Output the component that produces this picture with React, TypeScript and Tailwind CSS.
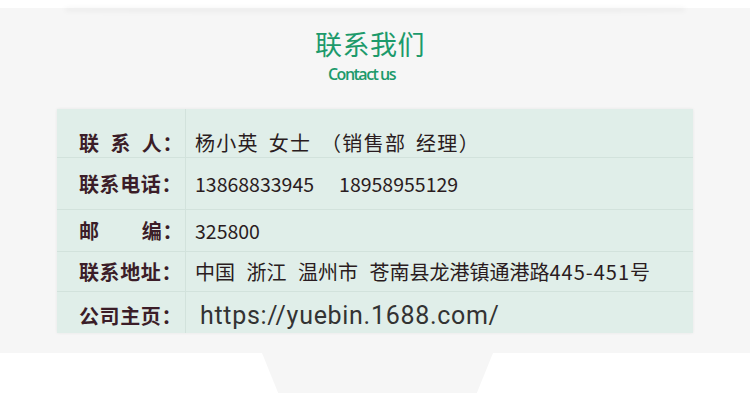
const cjk = "font-['Noto_Sans_CJK_SC',sans-serif]";

interface RowProps {
  label: string[];
  children: React.ReactNode;
  className?: string;
  cellPad?: string;
  last?: boolean;
}

function Row({ label, children, className = '', cellPad = '', last }: RowProps) {
  return (
    <div className={`flex ${last ? '' : 'border-b border-[#d2e2dc]'} ${className}`}>
      <div className={`w-[129px] shrink-0 flex items-center pl-[22px] border-r border-[#d2e2dc] ${cellPad}`}>
        <div className="w-[104px] flex justify-between text-[20px] leading-[30px] font-bold tracking-[0.6px] text-[#3b1d28]">
          {label.map((t) => (
            <span key={t}>{t}</span>
          ))}
        </div>
      </div>
      <div className={`flex-1 flex items-center pl-[9px] text-[#2a1c21] ${cellPad}`}>{children}</div>
    </div>
  );
}

export default function App() {
  return (
    <div className={`w-[750px] h-[402px] bg-white overflow-hidden ${cjk}`}>
      <div className="h-[8px] bg-white" />
      <div className="h-[345px] bg-[#f6f6f6] flex flex-col">
        <div className="mx-auto w-[620px] h-[6px] bg-gradient-to-b from-black/[0.06] to-transparent rounded-b-[50%] blur-[2px]" />

        <div className="flex flex-col items-center mt-[10px]">
          <h1 className="text-[27px] leading-[39px] text-[#1c9a6b] tracking-[0.5px] pr-[10px]">联系我们</h1>
          <p className="text-[16px] leading-[22px] font-semibold text-[#1c9a6b] tracking-[-1.5px] pr-[27px] font-['Open_Sans',sans-serif]">
            Contact us
          </p>
        </div>

        <div className="mt-[24px] ml-[57px] w-[636px] bg-[#e0eee9] shadow-[0_0_3px_rgba(0,0,0,0.07)]">
          <Row label={['联', '系', '人：']} className="h-[49px]" cellPad="pt-[19px]">
            <span className="text-[20px] leading-[30px] tracking-[1.3px] [word-spacing:4px]">
              杨小英 女士 （销售部 经理）
            </span>
          </Row>
          <Row label={['联系电话：']} className="h-[52px]">
            <span className="text-[19.5px] leading-[30px]">13868833945</span>
            <span className="text-[19.5px] leading-[30px] ml-[25px]">18958955129</span>
          </Row>
          <Row label={['邮', '编：']} className="h-[42px]">
            <span className="text-[19.5px] leading-[30px]">325800</span>
          </Row>
          <Row label={['联系地址：']} className="h-[40px]">
            <span className="text-[20px] leading-[30px] [word-spacing:7px]">
              中国 浙江 温州市 苍南县龙港镇通港路<span className="tracking-[1px]">445-451</span>号
            </span>
          </Row>
          <Row label={['公司主页：']} className="h-[41px]" cellPad="pt-[6px]" last>
            <span className="ml-[5px] text-[25px] leading-[30px] tracking-[0.7px] text-[#333] font-['Roboto',sans-serif]">
              https://yuebin.1688.com/
            </span>
          </Row>
        </div>
      </div>

      <div className="ml-[262px] w-[231px] h-[40px] bg-[#f6f6f6] [clip-path:polygon(0_0,100%_0,93%_100%,7%_100%)]" />
    </div>
  );
}
